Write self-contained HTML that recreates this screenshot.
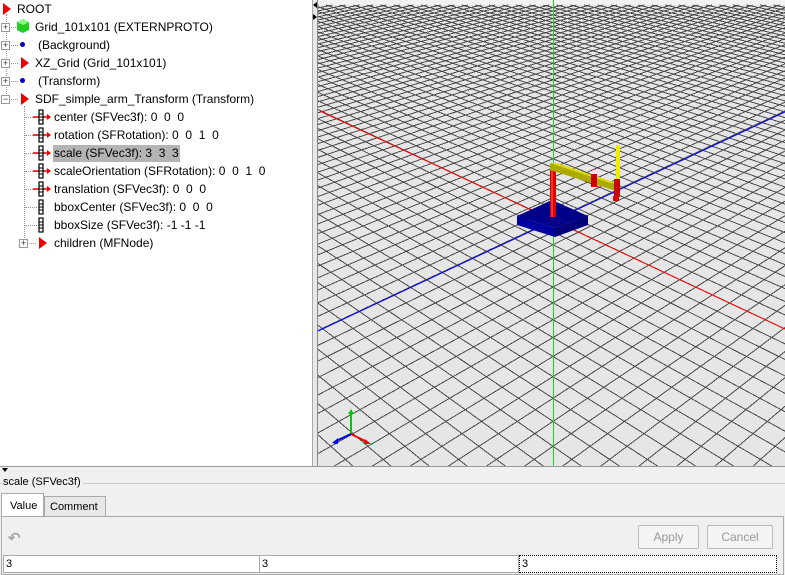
<!DOCTYPE html>
<html><head><meta charset="utf-8"><style>
*{margin:0;padding:0;box-sizing:border-box}
body{width:785px;height:574px;overflow:hidden;background:#f0f0f0;font-family:"Liberation Sans",sans-serif;font-size:12px;color:#000;position:relative}
#tree{position:absolute;left:0;top:0;width:313px;height:466px;background:#fff;border-right:1px solid #aaa}
.row{position:absolute;height:18px;line-height:18px;white-space:nowrap}
.pm{position:absolute;width:9px;height:9px;border:1px solid #999;background:#fff;font-size:9px;line-height:7px;text-align:center;color:#333}
.dot{position:absolute;border-left:1px dotted #999}
.hd{position:absolute;border-top:1px dotted #999}
.tri{position:absolute;width:0;height:0;border-top:6px solid transparent;border-bottom:6px solid transparent;border-left:8px solid #e00}
.bd{position:absolute;width:5px;height:5px;border-radius:50%;background:#00c}
#div{position:absolute;left:313px;top:0;width:5px;height:466px;background:#e8e8e8;border-right:1px solid #888}
#vp{position:absolute;left:318px;top:0;width:467px;height:466px;overflow:hidden;background:#e6e6e6}
#bot{position:absolute;left:0;top:466px;width:785px;height:108px;background:#f0f0f0;border-top:1px solid #999}
</style></head><body>
<div id="tree">
<div class="tri" style="left:3px;top:3px"></div><div class="row" style="left:17px;top:0">ROOT</div>
<div class="dot" style="left:6px;top:14px;height:86px"></div>
<div class="pm" style="left:1px;top:23px">+</div><div class="hd" style="left:11px;top:27px;width:7px"></div>
<svg style="position:absolute;left:17px;top:19px" width="12" height="14"><polygon points="6,0 12,3 12,11 6,14 0,11 0,3" fill="#2c2"/><polygon points="6,0 12,3 6,6 0,3" fill="#8f8"/></svg>
<div class="row" style="left:35px;top:18px">Grid_101x101 (EXTERNPROTO)</div>
<div class="pm" style="left:1px;top:41px">+</div><div class="hd" style="left:11px;top:45px;width:7px"></div><div class="bd" style="left:20px;top:42px"></div>
<div class="row" style="left:38px;top:36px">(Background)</div>
<div class="pm" style="left:1px;top:59px">+</div><div class="hd" style="left:11px;top:63px;width:7px"></div><div class="tri" style="left:21px;top:57px"></div>
<div class="row" style="left:35px;top:54px">XZ_Grid (Grid_101x101)</div>
<div class="pm" style="left:1px;top:77px">+</div><div class="hd" style="left:11px;top:81px;width:7px"></div><div class="bd" style="left:20px;top:78px"></div>
<div class="row" style="left:38px;top:72px">(Transform)</div>
<div class="pm" style="left:1px;top:95px">−</div><div class="hd" style="left:11px;top:99px;width:7px"></div><div class="tri" style="left:21px;top:93px"></div>
<div class="row" style="left:35px;top:90px">SDF_simple_arm_Transform (Transform)</div>
<div class="dot" style="left:24px;top:106px;height:136px"></div>
<div class="hd" style="left:25px;top:117px;width:12px"></div><div class="hd" style="left:25px;top:135px;width:12px"></div><div class="hd" style="left:25px;top:153px;width:12px"></div><div class="hd" style="left:25px;top:171px;width:12px"></div><div class="hd" style="left:25px;top:189px;width:12px"></div><div class="hd" style="left:25px;top:207px;width:12px"></div><div class="hd" style="left:25px;top:225px;width:12px"></div>
<svg style="position:absolute;left:30px;top:108px" width="22" height="130">
<g id="f"><line x1="3" y1="9" x2="20" y2="9" stroke="#e00" stroke-width="1.5"/><polygon points="17,6 21,9 17,12" fill="#e00"/><rect x="9" y="2" width="4" height="14" fill="#fff" stroke="#000" stroke-width="1.2"/><line x1="9" y1="6" x2="13" y2="6" stroke="#000"/><line x1="9" y1="9" x2="13" y2="9" stroke="#000"/><line x1="9" y1="12" x2="13" y2="12" stroke="#000"/></g>
<use href="#f" y="18"/><use href="#f" y="36"/><use href="#f" y="54"/><use href="#f" y="72"/>
<g transform="translate(0,90)"><rect x="9" y="2" width="4" height="14" fill="#fff" stroke="#000" stroke-width="1.2"/><line x1="9" y1="6" x2="13" y2="6" stroke="#000"/><line x1="9" y1="9" x2="13" y2="9" stroke="#000"/><line x1="9" y1="12" x2="13" y2="12" stroke="#000"/></g>
<g transform="translate(0,108)"><rect x="9" y="2" width="4" height="14" fill="#fff" stroke="#000" stroke-width="1.2"/><line x1="9" y1="6" x2="13" y2="6" stroke="#000"/><line x1="9" y1="9" x2="13" y2="9" stroke="#000"/><line x1="9" y1="12" x2="13" y2="12" stroke="#000"/></g>
</svg>
<div class="row" style="left:54px;top:108px">center (SFVec3f): 0&nbsp; 0&nbsp; 0</div>
<div class="row" style="left:54px;top:126px">rotation (SFRotation): 0&nbsp; 0&nbsp; 1&nbsp; 0</div>
<div class="row" style="left:53px;top:145px;background:#b4b4b4;padding:0 1px;height:17px;line-height:17px">scale (SFVec3f): 3&nbsp; 3&nbsp; 3</div>
<div class="row" style="left:54px;top:162px">scaleOrientation (SFRotation): 0&nbsp; 0&nbsp; 1&nbsp; 0</div>
<div class="row" style="left:54px;top:180px">translation (SFVec3f): 0&nbsp; 0&nbsp; 0</div>
<div class="row" style="left:54px;top:198px">bboxCenter (SFVec3f): 0&nbsp; 0&nbsp; 0</div>
<div class="row" style="left:54px;top:216px">bboxSize (SFVec3f): -1 -1 -1</div>
<div class="pm" style="left:19px;top:239px">+</div><div class="hd" style="left:29px;top:243px;width:7px"></div><div class="tri" style="left:39px;top:237px"></div>
<div class="row" style="left:54px;top:234px">children (MFNode)</div>
</div>
<div id="div"><div style="position:absolute;left:0;top:2px;border-right:4px solid #000;border-top:3px solid transparent;border-bottom:3px solid transparent"></div><div style="position:absolute;left:0;top:14px;border-left:4px solid #000;border-top:3px solid transparent;border-bottom:3px solid transparent"></div></div>
<div id="vp">
<svg style="position:absolute;left:0;top:0" width="467" height="466">
<rect x="0" y="0" width="467" height="5" fill="#f2f2f2"/>
<g id="grid" transform="translate(-318,0)" stroke="#4a4a4a" stroke-width="1" shape-rendering="crispEdges"></g>
<line x1="2" y1="111" x2="467" y2="329" stroke="#f00" stroke-width="1"/>
<line x1="467" y1="112" x2="0" y2="331" stroke="#00f" stroke-width="1"/>
<line x1="235.5" y1="0" x2="235.5" y2="466" stroke="#2c2" stroke-width="1"/>
<g transform="translate(-318,0)">
<polygon points="517,216 552,200 588,216 555,228" fill="#00008a"/>
<polygon points="517,216 555,228 555,237 517,225" fill="#0000a0"/>
<polygon points="555,228 588,216 588,225 555,237" fill="#000078"/>
<rect x="550" y="167" width="6" height="50" fill="#d00"/><rect x="551" y="167" width="2" height="50" fill="#f33"/>
<polygon points="550,163 557,163 616,183 616,191 550,170" fill="#aa0"/><polygon points="550,163 557,163 616,183 610,183" fill="#dd0"/>
<rect x="591" y="174" width="6" height="13" fill="#c00"/>
<rect x="616" y="145" width="4" height="36" fill="#ee0"/>
<rect x="614" y="179" width="6" height="18" fill="#c00"/><rect x="613" y="196" width="6" height="5" fill="#d00"/>
<line x1="351" y1="434" x2="351" y2="412" stroke="#0c0" stroke-width="2"/><polygon points="348,414 351,409 354,414" fill="#0c0"/>
<line x1="351" y1="434" x2="367" y2="442" stroke="#e00" stroke-width="2"/><polygon points="365,439 371,444 364,444" fill="#e00"/>
<line x1="351" y1="434" x2="336" y2="441" stroke="#00e" stroke-width="2"/><polygon points="338,438 332,443 338,444" fill="#00e"/>
</g></svg></div>
<script>
(function(){var g=document.getElementById('grid'),s='';var y1=5,y2=466;
for(var i=-60;i<=60;i++){var c=i*25;
var a1=-447+(y1+250)*(1000+c)/470,a2=-447+(y2+250)*(1000+c)/470;
var b1=1553+(y1+250)*(c-1000)/470,b2=1553+(y2+250)*(c-1000)/470;
s+='<line x1="'+a1.toFixed(1)+'" y1="'+y1+'" x2="'+a2.toFixed(1)+'" y2="'+y2+'"/>';
s+='<line x1="'+b1.toFixed(1)+'" y1="'+y1+'" x2="'+b2.toFixed(1)+'" y2="'+y2+'"/>';}
g.innerHTML=s;})();
</script>
<div id="bot">
<div style="position:absolute;left:2px;top:1px;border-top:4px solid #000;border-left:3px solid transparent;border-right:3px solid transparent"></div>
<div style="position:absolute;left:0;top:16px;width:785px;border-top:1px solid #ccc"></div>
<div style="position:absolute;left:3px;top:9px;background:#f0f0f0;padding-right:2px;font-size:11px">scale (SFVec3f)</div>
<div style="position:absolute;left:1px;top:26px;width:43px;height:24px;background:#fff;border:1px solid #aaa;border-bottom:none;font-size:11px;padding:6px 0 0 8px">Value</div>
<div style="position:absolute;left:44px;top:29px;width:62px;height:20px;background:#e8e8e8;border:1px solid #aaa;border-bottom:none;font-size:11px;padding:4px 0 0 5px">Comment</div>
<div style="position:absolute;left:1px;top:49px;width:783px;height:59px;border:1px solid #aaa;background:#f0f0f0"></div>
<div style="position:absolute;left:8px;top:62px;color:#aaa;font-size:15px;font-weight:bold">↶</div>
<div style="position:absolute;left:638px;top:58px;width:61px;height:24px;border:1px solid #bbb;border-radius:2px;background:#f4f4f4;color:#999;text-align:center;line-height:22px">Apply</div>
<div style="position:absolute;left:707px;top:58px;width:66px;height:24px;border:1px solid #bbb;border-radius:2px;background:#f4f4f4;color:#999;text-align:center;line-height:22px">Cancel</div>
<div style="position:absolute;left:3px;top:88px;width:257px;height:18px;background:#fff;border:1px solid #aaa;font-size:11px;line-height:16px;padding-left:2px">3</div>
<div style="position:absolute;left:260px;top:88px;width:259px;height:18px;background:#fff;border:1px solid #aaa;border-left:none;font-size:11px;line-height:16px;padding-left:2px">3</div>
<div style="position:absolute;left:519px;top:88px;width:258px;height:18px;background:#fff;border:1px dotted #000;font-size:11px;line-height:16px;padding-left:2px">3</div>
</div>
</body></html>
